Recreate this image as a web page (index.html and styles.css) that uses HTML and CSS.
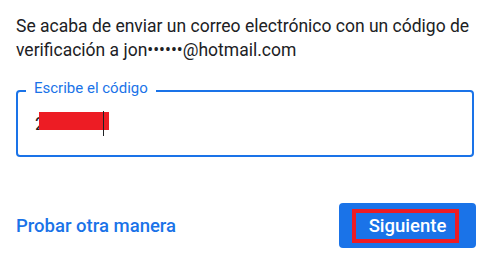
FILE: index.html
```html
<!DOCTYPE html>
<html lang="es">
<head>
<meta charset="utf-8">
<link rel="stylesheet" href="styles.css">
</head>
<body>
<div class="page">
  <p class="intro">Se acaba de enviar un correo electrónico con un código de verificación a jon••••••@hotmail.com</p>
  <div class="field">
    <span class="label">Escribe el código</span>
    <div class="value">2<span class="redact"></span><span class="caret"></span></div>
  </div>
  <div class="actions">
    <a class="link">Probar otra manera</a>
    <button class="next"><span class="outline">Siguiente</span></button>
  </div>
</div>
</body>
</html>
```
FILE: styles.css
```css
html, body { margin: 0; padding: 0; background: #fff; }
.page {
  width: 490px;
  height: 257px;
  padding: 14px 16px 0 16px;
  box-sizing: border-box;
  font-family: Roboto, "Liberation Sans", sans-serif;
  display: flex;
  flex-direction: column;
}
.intro {
  margin: 0;
  font-size: 17.5px;
  line-height: 24px;
  color: #202124;
  width: 460px;
}
.field {
  position: relative;
  margin-top: 28px;
  width: 458px;
  height: 67px;
  border: 2px solid #1a73e8;
  border-radius: 4px;
  box-sizing: border-box;
  display: flex;
  align-items: center;
  padding-left: 17px;
}
.label {
  position: absolute;
  top: -12px;
  left: 8px;
  padding: 0 8px;
  background: #fff;
  font-size: 15px;
  line-height: 16px;
  color: #1a73e8;
}
.value {
  position: relative;
  height: 24px;
  line-height: 24px;
  font-size: 17.5px;
  color: #202124;
  margin-top: 1px;
}
.redact {
  position: absolute;
  left: 4px;
  top: 0;
  width: 70px;
  height: 18px;
  background: #ed1c24;
}
.caret {
  position: absolute;
  left: 68px;
  top: -1px;
  width: 1px;
  height: 25px;
  background: #202124;
}
.actions {
  margin-top: 46px;
  display: flex;
  justify-content: space-between;
  align-items: center;
  width: 460px;
}
.link {
  color: #1a73e8;
  font-size: 18.5px;
  font-weight: 500;
}
.next {
  width: 137px;
  height: 45px;
  background: #1a73e8;
  border: none;
  border-radius: 4px;
  padding: 0 0 0 13px;
  display: flex;
  align-items: center;
  font-family: Roboto, "Liberation Sans", sans-serif;
  font-size: 18.5px;
  font-weight: 500;
  color: #fff;
}
.outline {
  width: 107px;
  height: 34px;
  box-sizing: border-box;
  border: 4px solid #ed1c24;
  padding-left: 4px;
  display: flex;
  align-items: center;
  justify-content: center;
}
```
